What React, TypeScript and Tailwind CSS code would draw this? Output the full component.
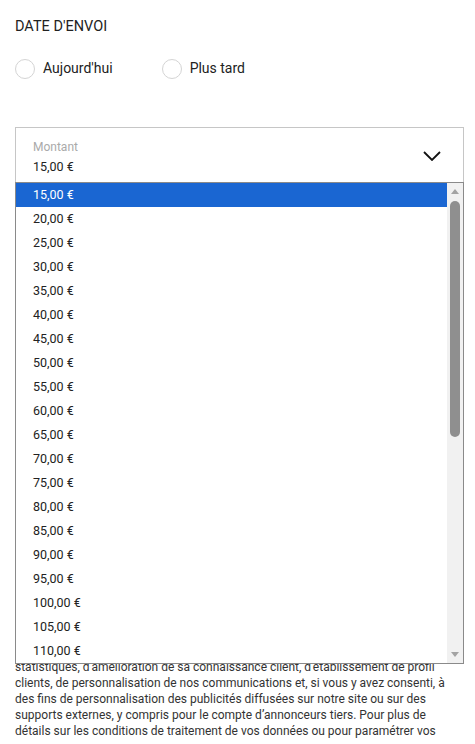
import React from "react";

const amounts = Array.from({ length: 20 }, (_, i) => `${15 + i * 5},00 €`);

const legalLines = [
  "statistiques, d'amélioration de sa connaissance client, d'établissement de profil",
  "clients, de personnalisation de nos communications et, si vous y avez consenti, à",
  "des fins de personnalisation des publicités diffusées sur notre site ou sur des",
  "supports externes, y compris pour le compte d’annonceurs tiers. Pour plus de",
  "détails sur les conditions de traitement de vos données ou pour paramétrer vos",
];

const Radio = (props: { label: string; className?: string }) => {
  return (
    <label className={`flex items-center gap-[8px] ${props.className || ""}`}>
      <span className="w-[20px] h-[20px] rounded-full border border-[#d4d4d4] bg-white"></span>
      <span className="text-[14px] text-[#222]">{props.label}</span>
    </label>
  );
};

const Chevron = () => (
  <svg width="18" height="10" viewBox="0 0 18 10" fill="none">
    <path d="M1 1l8 8 8-8" stroke="#111" strokeWidth="1.8" />
  </svg>
);

export default function App() {
  return (
    <div className="relative w-[475px] h-[744px] overflow-hidden bg-white font-['Roboto',sans-serif] text-[#222]">
      <div className="px-[15px] pt-[18px]">
        <h3 className="text-[14.5px] leading-[18px] uppercase">Date d'envoi</h3>
        <div className="flex items-center mt-[22px]">
          <Radio label="Aujourd'hui" />
          <Radio label="Plus tard" className="ml-[49px]" />
        </div>

        <div className="mt-[48px] w-[449px] h-[57px] border border-[#c6c6c6] flex justify-between pl-[17px] pr-[22px]">
          <div className="flex flex-col pt-[11px]">
            <span className="text-[12px] leading-[16px] text-[#aaa]">Montant</span>
            <span className="text-[12.5px] leading-[20px] mt-[2px]">15,00 €</span>
          </div>
          <div className="self-center">
            <Chevron />
          </div>
        </div>

        <p className="mt-[475px] text-[12px] leading-[16px] text-[#333] whitespace-nowrap">
          {legalLines.map((l) => (
            <span key={l} className="block">
              {l}
            </span>
          ))}
        </p>
      </div>

      <div className="absolute left-[15px] top-[182px] w-[449px] h-[482px] border border-[#8a8a8a] bg-white flex">
        <ul className="flex-1 overflow-hidden">
          {amounts.map((a, i) => (
            <li
              key={a}
              className={`h-[24px] flex items-center pl-[17px] text-[12.5px] ${
                i === 0 ? "bg-[#1a66d2] text-white" : "text-[#222]"
              }`}
            >
              {a}
            </li>
          ))}
        </ul>
        <div className="w-[16px] bg-[#f1f1f1] flex flex-col items-center">
          <svg width="8" height="5" viewBox="0 0 8 5" className="mt-[6px]">
            <path d="M0 5L4 0L8 5Z" fill="#a3a3a3" />
          </svg>
          <div className="w-[10px] h-[236px] mt-[7px] rounded-full bg-[#8f8f8f]"></div>
          <div className="flex-1"></div>
          <svg width="8" height="5" viewBox="0 0 8 5" className="mb-[6px]">
            <path d="M0 0L8 0L4 5Z" fill="#a3a3a3" />
          </svg>
        </div>
      </div>
    </div>
  );
}
